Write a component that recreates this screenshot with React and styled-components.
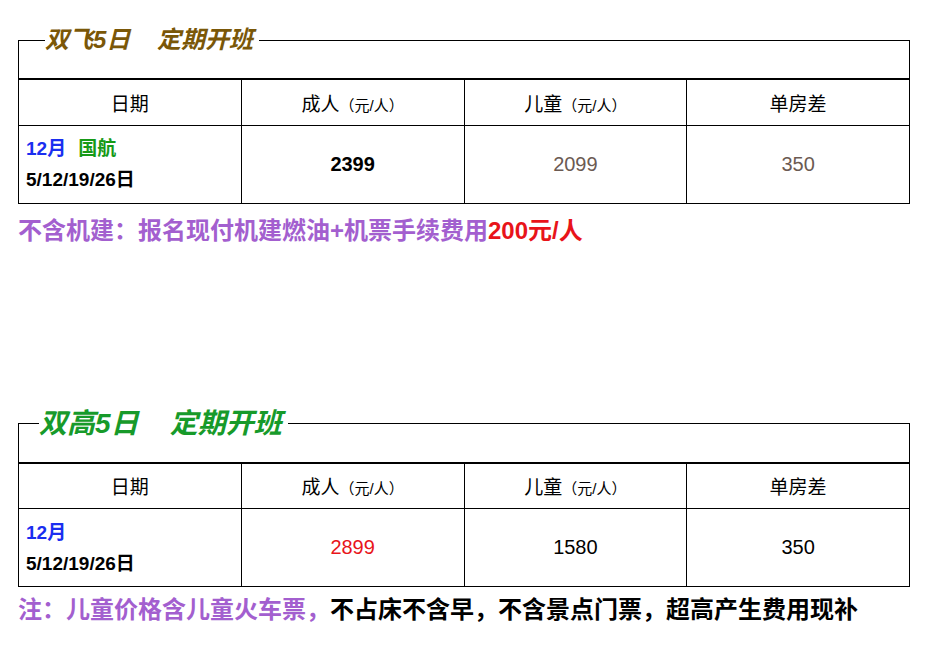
import React from "react";
import styled, { createGlobalStyle } from "styled-components";

const G = createGlobalStyle`
  body { margin: 0; background: #fff; font-family: "Liberation Sans", Arial, "Noto Sans CJK SC", sans-serif; }
`;
const Page = styled.div`padding: 28px 16px 0 18px;`;
const Section = styled.div`margin-top: ${p => p.$mt}px;`;
const Box = styled.fieldset`
  margin: 0; padding: 0; box-sizing: border-box;
  border: 1px solid #000; border-bottom: 2px solid #000; height: ${p => p.$h}px;
`;
const Legend = styled.legend`
  margin-left: ${p => p.$ml}px; padding: 0 6px 0 0;
  font-size: ${p => p.$fs}px; font-weight: bold; font-style: italic; color: ${p => p.$c};
  line-height: 1;
`;
const Table = styled.table`
  width: 892px; border-collapse: collapse; table-layout: fixed;
  td { border: 1px solid #000; border-top: none; text-align: center; font-size: 19px; }
`;
const Head = styled.tr`height: 45px; td { color: #000; }`;
const Row = styled.tr`height: 78px;`;
const Small = styled.span`font-size: 15px;`;
const DateCell = styled.td`
  && { text-align: left; padding-left: 7px; font-weight: bold; font-size: 19px; line-height: 31px; }
`;
const Blue = styled.span`color: #1a2ef0;`;
const Green = styled.span`color: #179a17; margin-left: 12px;`;
const Price = styled.td`
  && { font-size: 20px; color: ${p => p.$c}; font-weight: ${p => (p.$b ? "bold" : "normal")}; }
`;
const Note = styled.p`
  margin: ${p => p.$mt}px 0 0; font-size: 24px; font-weight: bold; color: #a35fcf; line-height: 38px;
`;
const Red = styled.span`color: #e8141a;`;
const Black = styled.span`color: #000;`;

const Header = () => (
  <Head>
    <td>日期</td>
    <td>成人<Small>（元/人）</Small></td>
    <td>儿童<Small>（元/人）</Small></td>
    <td>单房差</td>
  </Head>
);

export default function App() {
  return (
    <Page>
      <G />
      <Section $mt={0}>
        <Box $h={52}>
          <Legend $ml={26} $fs={24} $c="#7a5708">双飞5日&nbsp;&nbsp;&nbsp;&nbsp;定期开班</Legend>
        </Box>
        <Table>
          <tbody>
            <Header />
            <Row>
              <DateCell><Blue>12月</Blue><Green>国航</Green><br />5/12/19/26日</DateCell>
              <Price $c="#000" $b>2399</Price>
              <Price $c="#6b5a52">2099</Price>
              <Price $c="#6b5a52">350</Price>
            </Row>
          </tbody>
        </Table>
        <Note $mt={8}>不含机建：报名现付机建燃油+机票手续费用<Red>200元/人</Red></Note>
      </Section>
      <Section $mt={160}>
        <Box $h={54}>
          <Legend $ml={20} $fs={28} $c="#179a2a">双高5日&nbsp;&nbsp;&nbsp;&nbsp;定期开班</Legend>
        </Box>
        <Table>
          <tbody>
            <Header />
            <Row>
              <DateCell><Blue>12月</Blue><br /><Black>5/12/19/26日</Black></DateCell>
              <Price $c="#e8141a">2899</Price>
              <Price $c="#000">1580</Price>
              <Price $c="#000">350</Price>
            </Row>
          </tbody>
        </Table>
        <Note $mt={4}>注：儿童价格含儿童火车票，<Black>不占床不含早，不含景点门票，超高产生费用现补</Black></Note>
      </Section>
    </Page>
  );
}
